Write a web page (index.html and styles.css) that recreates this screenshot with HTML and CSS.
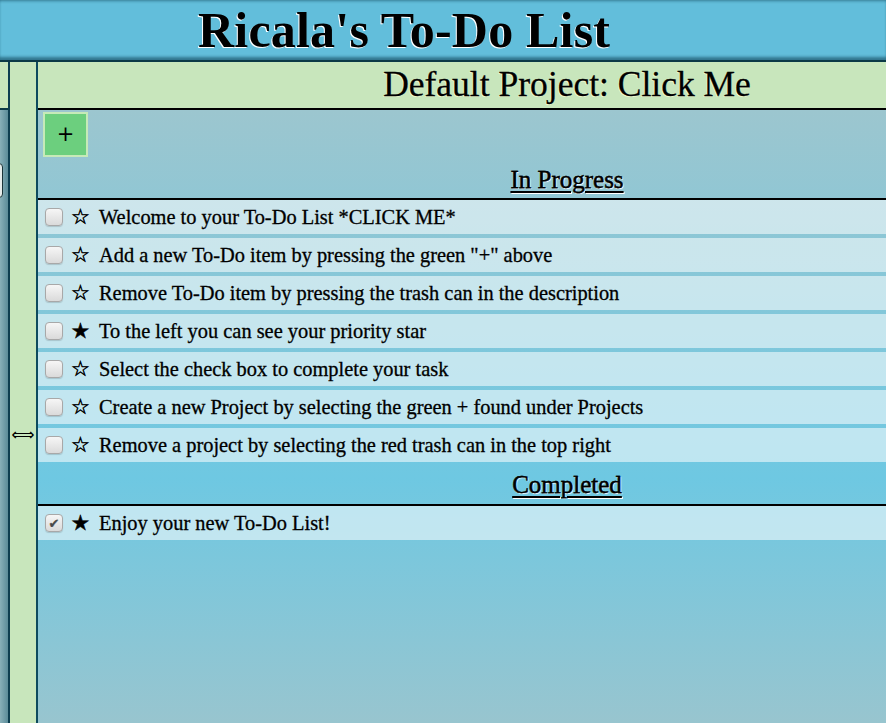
FILE: index.html
```html
<!DOCTYPE html>
<html>
<head>
<meta charset="utf-8">
<link rel="stylesheet" href="styles.css">
</head>
<body>
<header class="top">
  <h1 class="site-title">Ricala's To-Do List</h1>
</header>
<div class="layout">
  <aside class="sidebar">
    <div class="sidebar-head"></div>
    <div class="sidebar-body">
      <div class="sidebar-btn"></div>
    </div>
  </aside>
  <div class="divider"><span class="divider-arrow">⟺</span></div>
  <main class="main">
    <div class="project-head">Default Project: Click Me</div>
    <div class="content">
      <div class="add-row"><button class="add-btn">+</button></div>
      <h2 class="section-title"><span>In Progress</span></h2>
      <ul class="todo-list">
        <li class="todo"><span class="cb"></span><span class="star">☆</span><span class="todo-text">Welcome to your To-Do List *CLICK ME*</span></li>
        <li class="todo"><span class="cb"></span><span class="star">☆</span><span class="todo-text">Add a new To-Do item by pressing the green "+" above</span></li>
        <li class="todo"><span class="cb"></span><span class="star">☆</span><span class="todo-text">Remove To-Do item by pressing the trash can in the description</span></li>
        <li class="todo"><span class="cb"></span><span class="star">★</span><span class="todo-text">To the left you can see your priority star</span></li>
        <li class="todo"><span class="cb"></span><span class="star">☆</span><span class="todo-text">Select the check box to complete your task</span></li>
        <li class="todo"><span class="cb"></span><span class="star">☆</span><span class="todo-text">Create a new Project by selecting the green + found under Projects</span></li>
        <li class="todo"><span class="cb"></span><span class="star">☆</span><span class="todo-text">Remove a project by selecting the red trash can in the top right</span></li>
      </ul>
      <h2 class="section-title completed-title"><span>Completed</span></h2>
      <ul class="todo-list">
        <li class="todo"><span class="cb checked">✔</span><span class="star">★</span><span class="todo-text">Enjoy your new To-Do List!</span></li>
      </ul>
    </div>
  </main>
</div>
</body>
</html>
```
FILE: styles.css
```css
html, body {
  margin: 0;
  padding: 0;
  height: 100%;
  overflow: hidden;
}
body {
  font-family: "Liberation Serif", "DejaVu Serif", serif;
  color: #000;
  display: flex;
  flex-direction: column;
  background: #8fc6d3;
  -webkit-text-stroke: 0.3px #000;
}
.top {
  height: 60px;
  flex: none;
  background: #62bedb;
  box-shadow: inset 0 -4px 3px -1px rgba(10, 60, 80, 0.55), inset 0 3px 3px -2px rgba(10, 60, 80, 0.5);
  border-bottom: 2px solid #0b3946;
}
.site-title {
  margin: 0;
  padding-left: 198px;
  font-size: 50px;
  font-weight: bold;
  line-height: 60px;
  height: 60px;
  text-shadow: -1px 1px 0 #fff;
  letter-spacing: 0.2px;
  -webkit-text-stroke: 0;
}
.layout {
  flex: 1;
  display: flex;
  min-height: 0;
}
.sidebar {
  width: 8px;
  flex: none;
  display: flex;
  flex-direction: column;
  overflow: hidden;
}
.sidebar-head {
  height: 46px;
  background: #c8e6bc;
  border-bottom: 2px solid #0b3946;
  flex: none;
}
.sidebar-body {
  flex: 1;
  background: linear-gradient(to right, #88b0b9, #5b8c99);
  padding-top: 53px;
}
.sidebar-btn {
  margin-left: -50px;
  width: 51px;
  height: 33px;
  border: 1px solid #1b3438;
  border-radius: 4px;
  background: #e6ecea;
}
.divider {
  width: 26px;
  flex: none;
  background: #c8e6bc;
  border-left: 2px solid #0d3e50;
  border-right: 2px solid #0d4a5e;
  display: flex;
  justify-content: center;
  padding-top: 364px;
}
.divider-arrow {
  font-family: "DejaVu Sans", sans-serif;
  font-size: 16px;
  line-height: 18px;
  height: 18px;
  -webkit-text-stroke: 0;
}
.main {
  flex: 1;
  min-width: 0;
  display: flex;
  flex-direction: column;
}
.project-head {
  height: 46px;
  flex: none;
  background: #c8e6bc;
  border-bottom: 2px solid #000;
  text-align: center;
  padding-left: 210px;
  font-size: 35.5px;
  line-height: 44px;
  white-space: nowrap;
  text-shadow: -1px 1px 0 rgba(255, 255, 210, 0.7);
}
.content {
  flex: 1;
  background: linear-gradient(to bottom, #9cc6cf 0%, #6ec8e2 60%, #98c5cf 100%);
}
.add-row {
  height: 48px;
  padding: 2px 0 0 5px;
  box-sizing: border-box;
}
.add-btn {
  width: 45px;
  height: 45px;
  border: 2px solid #c6eab8;
  background: #6ccf7e;
  font-family: "DejaVu Sans", sans-serif;
  font-size: 21px;
  line-height: 1;
  color: #000;
  padding: 0;
  margin: 0;
  display: flex;
  align-items: center;
  justify-content: center;
  -webkit-text-stroke: 0;
}
.section-title {
  margin: 0;
  height: 40px;
  border-bottom: 2px solid #000;
  text-align: center;
  padding-left: 210px;
  font-size: 25px;
  font-weight: normal;
  line-height: 44px;
  text-decoration: underline;
  text-decoration-thickness: 2px;
  text-underline-offset: 3px;
  text-shadow: 1px 1px 1px #fff;
}
.completed-title {
  height: 42px;
  line-height: 46px;
}
.todo-list {
  list-style: none;
  margin: 0;
  padding: 0;
  display: flex;
  flex-direction: column;
  gap: 4px;
}
.todo {
  height: 34px;
  background: rgba(255, 255, 255, 0.55);
  display: flex;
  align-items: center;
  padding-left: 7px;
  font-size: 20.4px;
}
.cb {
  width: 16px;
  height: 16px;
  border: 1px solid #a8a8a8;
  border-radius: 4px;
  background: linear-gradient(#f6f6f6, #dadada);
  box-shadow: 0 1px 1px rgba(0, 0, 0, 0.15);
  flex: none;
  display: flex;
  align-items: center;
  justify-content: center;
  font-family: "DejaVu Sans", sans-serif;
  font-size: 13px;
  line-height: 1;
  color: #4a4a4a;
  -webkit-text-stroke: 0.3px #4a4a4a;
}
.star {
  font-family: "DejaVu Sans", sans-serif;
  font-size: 21px;
  width: 19px;
  margin-left: 8px;
  margin-right: 9px;
  text-align: center;
  line-height: 1;
  -webkit-text-stroke: 0.5px #000;
}
.todo-text {
  white-space: nowrap;
}
```
